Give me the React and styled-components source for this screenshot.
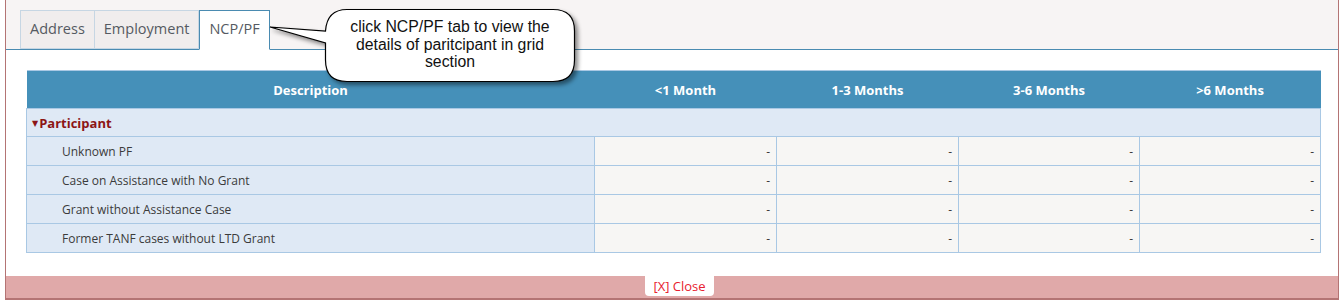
import React from 'react';
import styled, { createGlobalStyle } from 'styled-components';

const GlobalStyle = createGlobalStyle`
  html, body {
    margin: 0;
    padding: 0;
    background: #ffffff;
  }
  body {
    font-family: "Open Sans", "DejaVu Sans", sans-serif;
  }
`;

const Page = styled.div`
  position: relative;
  width: 1343px;
  height: 308px;
  overflow: hidden;
`;

const Panel = styled.div`
  margin-left: 5px;
  width: 1332px;
  border-left: 1px solid #b47474;
  border-right: 1px solid #b47474;
  background: #ffffff;
`;

const TabBar = styled.div`
  display: flex;
  align-items: flex-end;
  height: 49px;
  padding-left: 14px;
  background: #f7f4f4;
  border-bottom: 1px solid #4a8bb1;
`;

const Tab = styled.div`
  display: flex;
  align-items: center;
  box-sizing: border-box;
  height: ${({ $active }) => ($active ? '40px' : '39px')};
  margin-bottom: ${({ $active }) => ($active ? '-1px' : '0')};
  padding: 0 9px 3px 9px;
  font-size: 14.5px;
  color: #555a62;
  background: ${({ $active }) => ($active ? '#ffffff' : '#f0eded')};
  border: 1px solid ${({ $active }) => ($active ? '#4a8bb1' : '#c6d6e3')};
  border-bottom: ${({ $active }) => ($active ? '1px solid #ffffff' : '1px solid #c6d6e3')};
  border-left-width: ${({ $first, $active }) => ($first || $active ? '1px' : '0')};
`;

const Content = styled.div`
  padding: 20px 18px 23px 20px;
`;

const Grid = styled.table`
  width: 1294px;
  border-collapse: collapse;
  table-layout: fixed;
  font-size: 12px;
  color: #3b3b3b;
`;

const HeadCell = styled.th`
  height: 37px;
  padding: 0;
  background: #4590b9;
  color: #ffffff;
  font-size: 13px;
  font-weight: 700;
  text-align: center;
  border-top: 1px solid #a9c8e4;
`;

const GroupCell = styled.td`
  height: 27px;
  padding: 0 0 0 5px;
  background: #dfe9f5;
  color: #8c1515;
  font-weight: 700;
  font-size: 13px;
  border: 1px solid #a9c8e4;
`;

const Caret = styled.span`
  display: inline-block;
  font-size: 8px;
  margin-right: 1px;
  vertical-align: 2px;
`;

const LabelCell = styled.td`
  height: 28px;
  padding: 0 0 0 35px;
  background: #dfe9f5;
  border: 1px solid #a9c8e4;
`;

const ValueCell = styled.td`
  height: 28px;
  padding: 0 6px 0 0;
  background: #f7f6f4;
  text-align: right;
  border: 1px solid #a9c8e4;
`;

const Footer = styled.div`
  display: flex;
  justify-content: center;
  padding-left: 15px;
  height: 22px;
  background: #e0a9a9;
  border-bottom: 2px solid #b47474;
`;

const CloseTab = styled.div`
  height: 20px;
  padding: 0 8px;
  background: #ffffff;
  border-radius: 0 0 4px 4px;
  color: #e8202e;
  font-size: 13px;
  line-height: 20px;
`;

const Callout = styled.div`
  position: absolute;
  left: 265px;
  top: 5px;
  width: 320px;
  height: 88px;
`;

const CalloutShape = styled.svg`
  position: absolute;
  left: 0;
  top: 0;
  filter: drop-shadow(3px 3px 2px rgba(0, 0, 0, 0.45));
`;

const CalloutText = styled.div`
  position: relative;
  margin-left: 60px;
  width: 250px;
  padding-top: 13px;
  text-align: center;
  font-family: "Liberation Sans", Arial, sans-serif;
  font-size: 15.8px;
  line-height: 17.5px;
  color: #111111;
`;

const columns = ['<1 Month', '1-3 Months', '3-6 Months', '>6 Months'];

const rows = [
  'Unknown PF',
  'Case on Assistance with No Grant',
  'Grant without Assistance Case',
  'Former TANF cases without LTD Grant',
];

export default function App() {
  return (
    <>
      <GlobalStyle />
      <Page>
        <Panel>
          <TabBar>
            <Tab $first>Address</Tab>
            <Tab>Employment</Tab>
            <Tab $active>NCP/PF</Tab>
          </TabBar>
          <Content>
            <Grid>
              <colgroup>
                <col style={{ width: 568 }} />
                <col style={{ width: 182 }} />
                <col style={{ width: 182 }} />
                <col style={{ width: 181 }} />
                <col style={{ width: 181 }} />
              </colgroup>
              <thead>
                <tr>
                  <HeadCell>Description</HeadCell>
                  {columns.map((c) => (
                    <HeadCell key={c}>{c}</HeadCell>
                  ))}
                </tr>
              </thead>
              <tbody>
                <tr>
                  <GroupCell colSpan={5}>
                    <Caret>▼</Caret>Participant
                  </GroupCell>
                </tr>
                {rows.map((r) => (
                  <tr key={r}>
                    <LabelCell>{r}</LabelCell>
                    {columns.map((c) => (
                      <ValueCell key={c}>-</ValueCell>
                    ))}
                  </tr>
                ))}
              </tbody>
            </Grid>
          </Content>
          <Footer>
            <CloseTab>[X] Close</CloseTab>
          </Footer>
        </Panel>
        <Callout>
          <CalloutShape width="320" height="88" viewBox="0 0 320 88">
            <path
              d="M 82 4.5 H 288 Q 309.5 4.5 309.5 26 V 55 Q 309.5 76.5 288 76.5 H 82 Q 60.5 76.5 60.5 55 V 38 L 5 22 L 60.5 26 Q 62 4.5 82 4.5 Z"
              fill="#ffffff"
              stroke="#000000"
              strokeWidth="1.2"
            />
          </CalloutShape>
          <CalloutText>
            click NCP/PF tab to view the
            <br />
            details of paritcipant in grid
            <br />
            section
          </CalloutText>
        </Callout>
      </Page>
    </>
  );
}
